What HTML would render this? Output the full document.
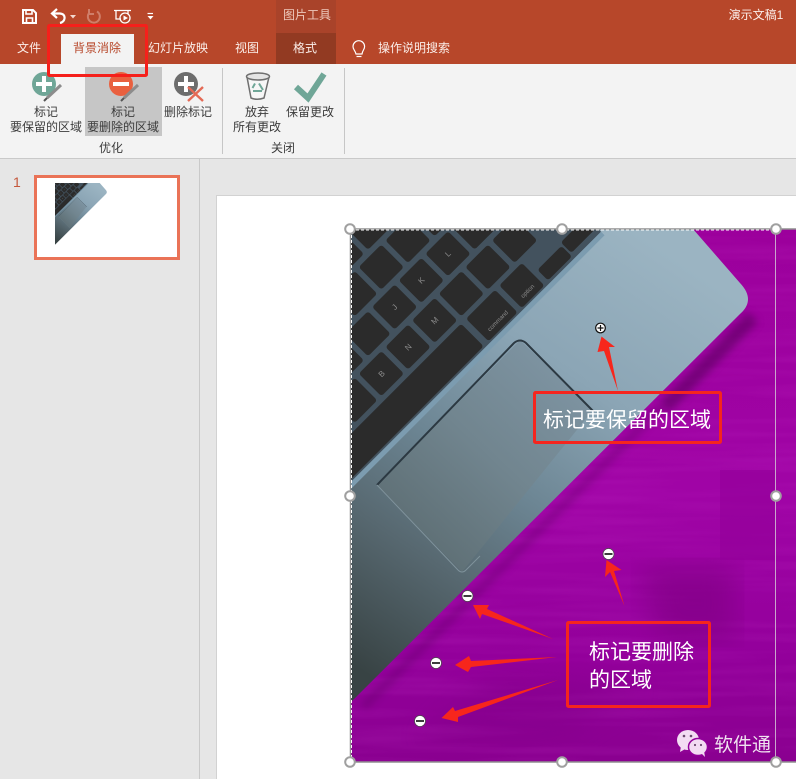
<!DOCTYPE html>
<html lang="zh">
<head>
<meta charset="utf-8">
<title>背景消除</title>
<style>
html,body{margin:0;padding:0;background:#e6e6e6;width:796px;height:779px;overflow:hidden}
svg{display:block;position:absolute;left:0;top:0}
text{font-family:"Liberation Sans","Noto Sans CJK SC",sans-serif}
.r{font-size:12px;fill:#3c3c3c;text-anchor:middle}
.t{font-size:12px;fill:#fbeee9;text-anchor:middle}
.w{font-size:21px;fill:#fff}
.kl{font-size:8px;fill:#8d8d8d;text-anchor:middle}
</style>
</head>
<body>
<svg width="796" height="779" viewBox="0 0 796 779" xmlns="http://www.w3.org/2000/svg">
<defs>
<clipPath id="imgc"><rect x="350" y="229" width="446" height="533"/></clipPath>
<clipPath id="lapc"><path d="M350,229L693,229L740,283Q756,300 740,314L350,703Z"/></clipPath>
<linearGradient id="metal" gradientUnits="userSpaceOnUse" x1="680" y1="260" x2="390" y2="690">
<stop offset="0" stop-color="#9bb4c2"/><stop offset=".3" stop-color="#8ba5b5"/><stop offset=".55" stop-color="#6c8593"/><stop offset=".75" stop-color="#576870"/><stop offset="1" stop-color="#384344"/>
</linearGradient>
<linearGradient id="pad" gradientUnits="userSpaceOnUse" x1="560" y1="370" x2="410" y2="530">
<stop offset="0" stop-color="#7d93a1"/><stop offset=".5" stop-color="#71858f"/><stop offset="1" stop-color="#5f7076"/>
</linearGradient>
<linearGradient id="purp" x1="0" y1="0" x2="0" y2="1">
<stop offset="0" stop-color="#9c009c"/><stop offset=".5" stop-color="#a004a6"/><stop offset=".8" stop-color="#93009b"/><stop offset="1" stop-color="#8a0090"/>
</linearGradient>
<filter id="blur6"><feGaussianBlur stdDeviation="4"/></filter>
<filter id="blur14"><feGaussianBlur stdDeviation="14"/></filter>
<filter id="grain" x="0" y="0" width="100%" height="100%">
<feTurbulence type="fractalNoise" baseFrequency="0.006 0.11" numOctaves="2" seed="4"/>
<feColorMatrix values="0 0 0 0 1  0 0 0 0 .2  0 0 0 0 1  1.1 0 0 0 -.42"/>
</filter>
<rect id="k" x="-16" y="-16" width="32" height="32" rx="3" fill="#2b2b2b"/>
<g id="laptop">
<g clip-path="url(#lapc)">
<rect x="340" y="220" width="460" height="500" fill="url(#metal)"/>
<g transform="translate(408,347) rotate(-45)">
<rect x="-420" y="-300" width="638" height="355" fill="#43525e"/>
<rect x="-420" y="55" width="638" height="5" fill="#7c9cb0"/>
<use href="#k" x="-113" y="0"/><use href="#k" x="-75.4" y="0"/><use href="#k" x="-37.7" y="0"/><use href="#k" x="0" y="0"/><use href="#k" x="37.7" y="0"/><use href="#k" x="75.4" y="0"/><use href="#k" x="113" y="0"/><use href="#k" x="150.8" y="0"/>
<use href="#k" x="-94.3" y="-37.7"/><use href="#k" x="-56.6" y="-37.7"/><use href="#k" x="-18.9" y="-37.7"/><use href="#k" x="18.8" y="-37.7"/><use href="#k" x="56.5" y="-37.7"/><use href="#k" x="94.2" y="-37.7"/><use href="#k" x="131.9" y="-37.7"/>
<use href="#k" x="-37.8" y="-75.4"/><use href="#k" x="0" y="-75.4"/><use href="#k" x="37.6" y="-75.4"/><use href="#k" x="75.3" y="-75.4"/><use href="#k" x="113" y="-75.4"/>
<use href="#k" x="18.7" y="-113"/><use href="#k" x="56.4" y="-113"/><use href="#k" x="94.1" y="-113"/>
<rect x="-320" y="21" width="374" height="32" rx="3" fill="#2b2b2b"/>
<rect x="61" y="21" width="41" height="32" rx="3" fill="#2b2b2b"/>
<rect x="108" y="21" width="32" height="32" rx="3" fill="#2b2b2b"/>
<rect x="146" y="37" width="34" height="15" rx="3" fill="#2b2b2b"/>
<rect x="182" y="34" width="34" height="15" rx="3" fill="#2b2b2b"/>
<text class="kl" x="-37.7" y="3">B</text><text class="kl" x="0" y="3">N</text><text class="kl" x="37.7" y="3">M</text>
<text class="kl" x="18.8" y="-35">J</text><text class="kl" x="56.5" y="-35">K</text><text class="kl" x="94.2" y="-35">L</text>
<text class="kl" x="82" y="47" style="font-size:6px">command</text>
<text class="kl" x="124" y="47" style="font-size:6px">option</text>
</g>
<path d="M520,340L593,410L462,572L377,485Z" fill="url(#pad)"/>
<path d="M377,485L514,343Q520,338 526,343L594,412" fill="none" stroke="#2c3942" stroke-width="2"/>
<path d="M377,485L458,570Q462,574 466,570L480,556" fill="none" stroke="#7f929b" stroke-width="1"/>
</g>
</g>
</defs>

<!-- title bar -->
<rect width="796" height="64" fill="#b7472a"/>
<rect x="276" y="0" width="60" height="33" fill="#a9432a"/>
<rect x="276" y="33" width="60" height="31" fill="#923a22"/>
<!-- ribbon -->
<rect y="64" width="796" height="94" fill="#f3f3f3"/>
<rect y="158" width="796" height="1" fill="#c9c9c9"/>
<rect y="159" width="796" height="620" fill="#e6e6e6"/>
<rect x="199" y="159" width="1" height="620" fill="#c9c9c9"/>
<rect x="85" y="67" width="77" height="69" fill="#c6c6c6"/>
<rect x="222" y="68" width="1" height="86" fill="#c6c6c6"/>
<rect x="344" y="68" width="1" height="86" fill="#c6c6c6"/>
<rect x="61" y="34" width="73" height="30" fill="#f3f3f3"/>

<!-- quick access -->
<g fill="none" stroke="#fff">
<path d="M23,10H33L36,13V23H23Z" stroke-width="2"/>
<path d="M26,10V14H32V10M26.5,23V18H32.500V23" stroke-width="1.600"/>
<path d="M57,9L52,13.500L57,18M52,13.500H60Q65,14 64.500,18.500Q64,22 60,23" stroke-width="2.200"/>
<path d="M97,11.500A6,6 0 1 1 89.500,12.500M89,9V14H94" stroke="#cf7e69" stroke-width="2"/>
<path d="M114,10.500H131M116,11V19H121M128,11V14" stroke-width="1.300"/>
<circle cx="125" cy="18" r="5" stroke-width="1.300"/>
<path d="M123.500,15.500L128,18L123.500,20.500Z" fill="#fff" stroke="none"/>
<path d="M147.500,13.500H153" stroke-width="1.200"/>
</g>
<path d="M70,15H76L73,18.500Z" fill="#f3d9d0"/>
<path d="M147.500,16H153.500L150.500,19.500Z" fill="#fff"/>

<!-- tabs -->
<text class="t" x="29" y="52">文件</text>
<text class="r" x="97" y="52" style="fill:#b7472a">背景消除</text>
<text class="t" x="178" y="52">幻灯片放映</text>
<text class="t" x="247" y="52">视图</text>
<text class="t" x="305" y="52">格式</text>
<text class="t" x="414" y="52">操作说明搜索</text>
<text class="t" x="307" y="19" style="fill:#eecabd">图片工具</text>
<text class="t" x="756" y="19">演示文稿1</text>
<g fill="none" stroke="#fff" stroke-width="1.200">
<path d="M356,54C355,50 353,49.500 353,46.500A5.800,5.800 0 0 1 364.600,46.500C364.600,49.500 362.600,50 362,54Z"/>
<path d="M356.500,56.500H361.500"/>
</g>

<!-- ribbon icons -->
<circle cx="44" cy="84" r="12" fill="#6fa697"/>
<path d="M44,76V92M36,84H52" stroke="#fff" stroke-width="4"/>
<path d="M47,98L61,85" stroke="#8c8c8c" stroke-width="3"/><path d="M47,98L44,101" stroke="#555" stroke-width="2"/>
<circle cx="121" cy="84" r="12" fill="#e9603f"/>
<path d="M113,84H129" stroke="#fff" stroke-width="4"/>
<path d="M124,98L138,85" stroke="#8c8c8c" stroke-width="3"/><path d="M124,98L121,101" stroke="#555" stroke-width="2"/>
<circle cx="186" cy="84" r="12" fill="#6d6d6d"/>
<path d="M186,76V92M178,84H194" stroke="#fff" stroke-width="4"/>
<path d="M188,87L203,101M203,87L188,101" stroke="#e46a55" stroke-width="2.400"/>
<g fill="none">
<path d="M247,77L251,98Q257,100.500 264,98L269,77" fill="#f6f6f6" stroke="#6f6f6f" stroke-width="1.500"/>
<ellipse cx="258" cy="76.500" rx="11.500" ry="3.500" fill="#e4e4e4" stroke="#6f6f6f" stroke-width="1.500"/>
<path d="M253,91H262M259,83.500L263,90M255,83.500L252.500,88" stroke="#6fa697" stroke-width="2"/>
</g>
<path d="M296,87L308,98L324,74" fill="none" stroke="#6fa697" stroke-width="6"/>

<text class="r" x="46" y="116">标记</text>
<text class="r" x="46" y="131">要保留的区域</text>
<text class="r" x="123" y="116">标记</text>
<text class="r" x="123" y="131">要删除的区域</text>
<text class="r" x="188" y="116">删除标记</text>
<text class="r" x="257" y="116">放弃</text>
<text class="r" x="257" y="131">所有更改</text>
<text class="r" x="310" y="116">保留更改</text>
<text class="r" x="111" y="152">优化</text>
<text class="r" x="283" y="152">关闭</text>

<!-- red highlight -->
<rect x="48.500" y="25.500" width="98" height="50" fill="none" stroke="#f5201b" stroke-width="3" rx="1"/>

<!-- thumbnail -->
<text x="13" y="187" font-size="14" style="fill:#c4583c">1</text>
<rect x="35.500" y="176.500" width="143" height="82" fill="#fff" stroke="#ea7357" stroke-width="3"/>
<use href="#laptop" transform="translate(55,183) scale(.1304) translate(-350,-229)"/>

<!-- slide -->
<rect x="216" y="195" width="580" height="584" fill="#d2d2d2"/>
<rect x="217" y="196" width="579" height="583" fill="#fff"/>

<!-- picture -->
<g clip-path="url(#imgc)">
<rect x="350" y="229" width="446" height="533" fill="url(#purp)"/>
<rect x="350" y="229" width="446" height="533" filter="url(#grain)" opacity=".13"/>
<path d="M640,565H735V640H660Z" fill="#7d0080" opacity=".55" filter="url(#blur14)"/>
<rect x="720" y="470" width="56" height="90" fill="#92009a" opacity=".6"/>
<path d="M500,670L640,690L560,740L420,740Z" fill="#7f0086" opacity=".35" filter="url(#blur14)"/>
<path d="M748,312L660,402L670,412L758,322Z" fill="#55005a" opacity=".55" filter="url(#blur6)"/>
<path d="M660,402L360,704L366,710L666,408Z" fill="#55005a" opacity=".3" filter="url(#blur6)"/>
<use href="#laptop"/>
</g>
<rect x="775" y="229" width="1" height="533" fill="#c9a6cc"/>

<!-- selection -->
<path d="M350,229H796M350,762H796" stroke="#8f8f8f" stroke-width="1.500" fill="none"/>
<path d="M350.500,229V762" stroke="#8f8f8f" stroke-width="1.500"/>
<path d="M351,230H775M351.500,230V762" stroke="#fff" stroke-width="1" stroke-dasharray="3 2" fill="none"/>
<g fill="#fff" stroke="#a0a0a0" stroke-width="2">
<circle cx="350" cy="229" r="4.800"/><circle cx="562" cy="229" r="4.800"/><circle cx="776" cy="229" r="4.800"/>
<circle cx="350" cy="496" r="4.800"/><circle cx="776" cy="496" r="4.800"/>
<circle cx="350" cy="762" r="4.800"/><circle cx="562" cy="762" r="4.800"/><circle cx="776" cy="762" r="4.800"/>
</g>

<!-- arrows -->
<g fill="#f7261c">
<path d="M601.500,336.500L615,347L609,347L618,391L604,351L597.500,352Z"/>
<path d="M606.500,560L621.500,570L614,571L624.500,606L610,572L605,577Z"/>
<path d="M473,605L489,605L487,609L553,639L482,614L480,619Z"/>
<path d="M455,665L469,656L471,661L557,657L471,667L468,672Z"/>
<path d="M441.500,718L453,707L455,711L558,680L458,717L458,722Z"/>
</g>

<!-- markers -->
<circle cx="600.500" cy="328" r="4.800" fill="#fff" stroke="#111" stroke-width="1.200"/>
<path d="M597.500,328H603.500M600.500,325V331" stroke="#111" stroke-width="1.200"/>
<g fill="#fff" stroke="#4a4a4a" stroke-width=".7">
<circle cx="608.500" cy="554" r="5.500"/><circle cx="467.500" cy="596" r="5.500"/><circle cx="436" cy="663" r="5.500"/><circle cx="420" cy="721" r="5.500"/>
</g>
<path d="M604.500,554H612.500M463.500,596H471.500M432,663H440M416,721H424" stroke="#222" stroke-width="1.800"/>

<!-- callouts -->
<rect x="534.500" y="392.500" width="186" height="50" fill="none" stroke="#f5251e" stroke-width="3" rx="1"/>
<text class="w" x="543" y="427">标记要保留的区域</text>
<rect x="567.500" y="622.500" width="142" height="84" fill="none" stroke="#f5251e" stroke-width="3" rx="1"/>
<text class="w" x="589" y="659">标记要删除</text>
<text class="w" x="589" y="687">的区域</text>

<!-- watermark -->
<g fill="#f3dcf3">
<ellipse cx="688" cy="740" rx="11" ry="10"/><path d="M681,746L680,752L687,748Z"/>
<ellipse cx="698" cy="747" rx="9.500" ry="8.500" stroke="#93009b" stroke-width="1.500"/>
<path d="M701,753L705,757L704,751Z"/>
</g>
<g fill="#6d4a70">
<circle cx="684" cy="736" r="1.300"/><circle cx="691" cy="736" r="1.300"/><circle cx="695" cy="745" r="1.100"/><circle cx="701" cy="745" r="1.100"/>
</g>
<text x="714" y="751" font-size="19" style="fill:#f0e2f0">软件通</text>
</svg>
</body>
</html>
